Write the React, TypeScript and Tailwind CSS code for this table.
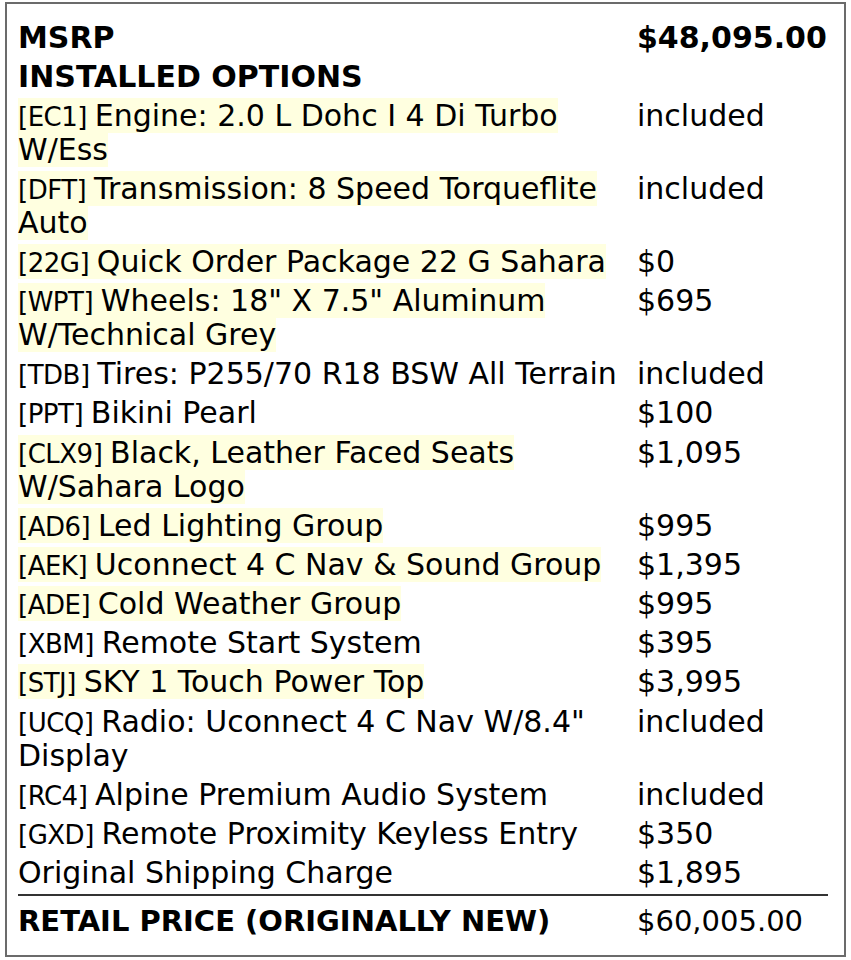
import React from "react";

type Option = { code?: string; label: string; price: string; hl?: boolean };

const options: Option[] = [
  { code: "EC1", label: "Engine: 2.0 L Dohc I 4 Di Turbo W/Ess", price: "included", hl: true },
  { code: "DFT", label: "Transmission: 8 Speed Torqueflite Auto", price: "included", hl: true },
  { code: "22G", label: "Quick Order Package 22 G Sahara", price: "$0", hl: true },
  { code: "WPT", label: 'Wheels: 18" X 7.5" Aluminum W/Technical Grey', price: "$695", hl: true },
  { code: "TDB", label: "Tires: P255/70 R18 BSW All Terrain", price: "included" },
  { code: "PPT", label: "Bikini Pearl", price: "$100" },
  { code: "CLX9", label: "Black, Leather Faced Seats W/Sahara Logo", price: "$1,095", hl: true },
  { code: "AD6", label: "Led Lighting Group", price: "$995", hl: true },
  { code: "AEK", label: "Uconnect 4 C Nav & Sound Group", price: "$1,395", hl: true },
  { code: "ADE", label: "Cold Weather Group", price: "$995", hl: true },
  { code: "XBM", label: "Remote Start System", price: "$395" },
  { code: "STJ", label: "SKY 1 Touch Power Top", price: "$3,995", hl: true },
  { code: "UCQ", label: 'Radio: Uconnect 4 C Nav W/8.4" Display', price: "included" },
  { code: "RC4", label: "Alpine Premium Audio System", price: "included" },
  { code: "GXD", label: "Remote Proximity Keyless Entry", price: "$350" },
  { label: "Original Shipping Charge", price: "$1,895" },
];

function Row({ left, right, className }: { left: React.ReactNode; right: React.ReactNode; className?: string }) {
  return (
    <div className={"grid grid-cols-[619px_1fr] pb-[5px] " + (className ?? "")}>
      <div>{left}</div>
      <div className="whitespace-nowrap">{right}</div>
    </div>
  );
}

export default function App() {
  return (
    <div className="bg-white min-h-screen pt-[2px] pl-[5px] text-black font-['DejaVu_Sans',sans-serif] text-[30px] leading-[34px]">
      <div className="w-[841px] border-2 border-[#6b6b6b] pt-[17px] pb-[17px] pl-[11px] pr-[16px]">
        <Row className="font-bold" left="MSRP" right="$48,095.00" />
        <Row className="font-bold" left="INSTALLED OPTIONS" right="" />
        {options.map((o, i) => (
          <Row
            key={o.label}
            className={i === 5 || i === 11 ? "pb-[6px]" : ""}
            left={
              <span className={o.hl ? "bg-[#ffffe0]" : ""}>
                {o.code && <span className="text-[26px] leading-none tracking-[-0.5px]">[{o.code}] </span>}
                {o.label}
              </span>
            }
            right={o.price}
          />
        ))}
        <div className="border-t-2 border-[#333] mt-[-1px] pt-[8px]">
          <div className="grid grid-cols-[619px_1fr] text-[29px]">
            <div className="font-bold">RETAIL PRICE (ORIGINALLY NEW)</div>
            <div>$60,005.00</div>
          </div>
        </div>
      </div>
    </div>
  );
}
